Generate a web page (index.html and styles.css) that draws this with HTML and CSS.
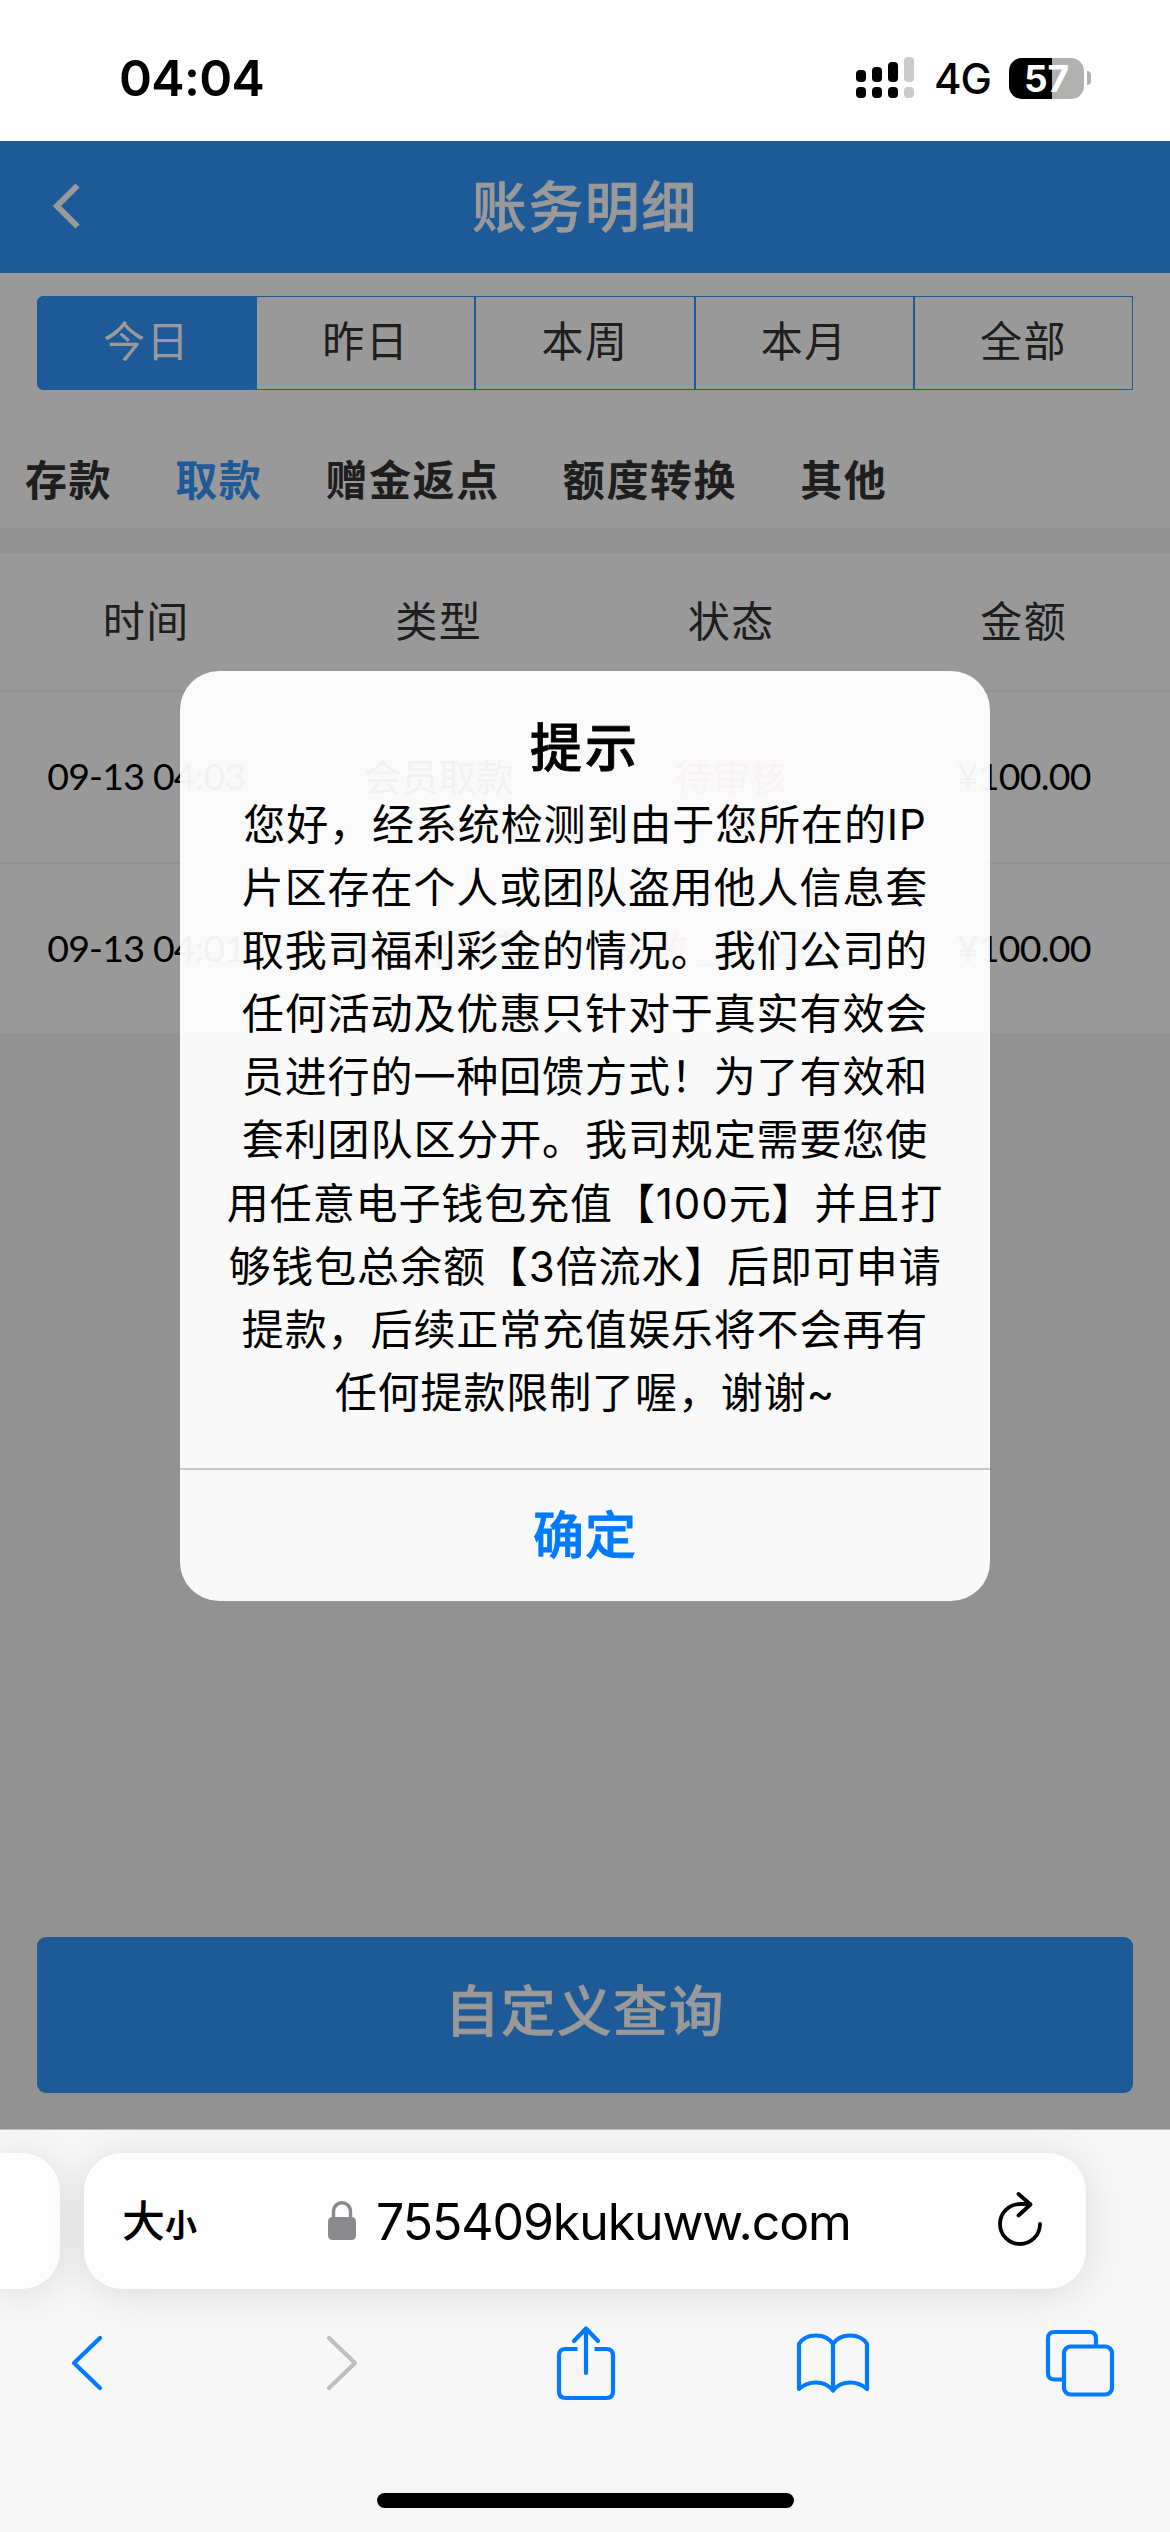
FILE: index.html
```html
<!DOCTYPE html>
<html lang="zh-CN">
<head>
<meta charset="utf-8">
<title>账务明细</title>
<link rel="stylesheet" href="styles.css">
</head>
<body>
<div class="phone">
  <header class="status">
    <span class="clock">04:04</span>
    <div class="indicators">
      <svg class="signal" width="58" height="42" viewBox="0 0 58 42">
        <g fill="#000">
          <rect x="0" y="13" width="10" height="12" rx="4"/><rect x="16" y="10" width="10" height="15" rx="4"/><rect x="32" y="5" width="10" height="20" rx="4"/>
          <rect x="0" y="30" width="10" height="11" rx="4"/><rect x="16" y="30" width="10" height="11" rx="4"/><rect x="32" y="30" width="10" height="11" rx="4"/>
        </g>
        <g fill="#cbcbcb"><rect x="48" y="0" width="10" height="25" rx="4"/><rect x="48" y="30" width="10" height="11" rx="4"/></g>
      </svg>
      <span class="network">4G</span>
      <div class="battery"><span class="cell">57</span><span class="tip"></span></div>
    </div>
  </header>

  <main class="page">
    <div class="navbar">
      <svg class="back" width="30" height="48" viewBox="0 0 30 48"><path d="M25.500 3.500L5 24L25.500 44.500" fill="none" stroke="#fff" stroke-width="6"/></svg>
      <h1>账务明细</h1>
    </div>
    <div class="range">
      <span class="on">今日</span><span>昨日</span><span>本周</span><span>本月</span><span>全部</span>
    </div>
    <nav class="kinds">
      <span>存款</span><span class="on">取款</span><span>赠金返点</span><span>额度转换</span><span>其他</span>
    </nav>
    <section class="table">
      <div class="row head"><span>时间</span><span>类型</span><span>状态</span><span>金额</span></div>
      <div class="row"><span class="num">09-13 04:03</span><span>会员取款</span><span class="bad">待审核</span><span class="num">¥100.00</span></div>
      <div class="row"><span class="num">09-13 04:01</span><span>虚拟币取款</span><span class="bad">失败 <a>【查看】</a></span><span class="num">¥100.00</span></div>
    </section>
    <div class="query">自定义查询</div>

    <div class="mask">
      <div class="dialog">
        <h2>提示</h2>
        <p>您好，经系统检测到由于您所在的IP<br>片区存在个人或团队盗用他人信息套<br>取我司福利彩金的情况。我们公司的<br>任何活动及优惠只针对于真实有效会<br>员进行的一种回馈方式！为了有效和<br>套利团队区分开。我司规定需要您使<br>用任意电子钱包充值【100元】并且打<br>够钱包总余额【3倍流水】后即可申请<br>提款，后续正常充值娱乐将不会再有<br>任何提款限制了喔，谢谢~</p>
        <div class="confirm">确定</div>
      </div>
    </div>
  </main>

  <footer class="browser">
    <div class="address-row">
      <div class="prev-tab"></div>
      <div class="address">
        <span class="size"><b>大</b><i>小</i></span>
        <span class="site">
          <svg width="28" height="40" viewBox="0 0 28 40"><rect x="0" y="16" width="28" height="23" rx="4.500" fill="#8a8a8e"/><path d="M5.500 17V11C5.500 -1.300 22.500 -1.300 22.500 11V17" fill="none" stroke="#8a8a8e" stroke-width="3.400"/></svg>
          <span class="url">755409kukuww.com</span>
        </span>
        <svg class="reload" width="46" height="56" viewBox="0 0 46 56"><g fill="none" stroke="#000" stroke-width="3.800" stroke-linecap="round" stroke-linejoin="round"><path d="M44 31A20 20 0 1 1 24 11H34"/><path d="M22.500 1L34.500 11.500L22.500 22.500"/></g></svg>
      </div>
    </div>
    <div class="tools">
      <svg width="32" height="56" viewBox="0 0 32 56"><path d="M29 3L3 28L29 53" class="line"/></svg>
      <svg width="32" height="56" viewBox="0 0 32 56"><path d="M3 3L29 28L3 53" class="line off"/></svg>
      <svg width="58" height="74" viewBox="0 0 58 74"><path d="M20.500 23H8.500Q2 23 2 29.500V65.500Q2 72 8.500 72H49.500Q56 72 56 65.500V29.500Q56 23 49.500 23H37.500" class="line butt"/><path d="M29 47V3M17 15L29 2.500L41 15" class="line"/></svg>
      <svg width="72" height="60" viewBox="0 0 72 60"><path d="M36 11C32 5 26 2.500 19 2.500C12 2.500 5.500 5 2 11V56C7 51.500 12 49.500 19 49.500C26 49.500 32 52.500 36 57.500C40 52.500 46 49.500 53 49.500C60 49.500 65 51.500 70 56V11C66.500 5 60 2.500 53 2.500C46 2.500 40 5 36 11V57" class="line"/></svg>
      <svg width="68" height="67" viewBox="0 0 68 67"><rect x="18" y="16.500" width="48" height="48" rx="6.500" class="line"/><path d="M16 49.500H8.500Q2 49.500 2 43V8.500Q2 2 8.500 2H43.500Q50 2 50 8.500V15" class="line butt"/></svg>
    </div>
    <div class="home"></div>
  </footer>
</div>
</body>
</html>
```
FILE: styles.css
```css
* { box-sizing: border-box; margin: 0; padding: 0; }

body { background: #fff; font-family: Inter, "Noto Sans CJK SC", sans-serif; }

svg { display: block; flex: none; overflow: visible; }

.phone { width: 1170px; height: 2532px; display: flex; flex-direction: column; overflow: hidden; }

/* status bar */
.status { height: 141px; display: flex; justify-content: space-between; align-items: flex-start; padding: 57px 79px 0 119px; }
.clock { font-size: 50px; line-height: 42px; font-weight: 600; letter-spacing: -.7px; white-space: nowrap; }
.indicators { display: flex; height: 42px; }
.network { margin-left: 20px; width: 75px; font-size: 42px; line-height: 43px; font-weight: 500; letter-spacing: -1px; }
.battery { display: flex; align-items: center; gap: 3px; }
.cell { width: 75px; height: 41px; border-radius: 13px; background: linear-gradient(90deg, #000 43px, #b1b1b1 43px); color: #fff; font-size: 37px; line-height: 41px; font-weight: 700; text-align: center; }
.tip { width: 4px; height: 14px; border-radius: 0 7px 7px 0; background: #b1b1b1; }

/* page */
.page { position: relative; height: 1988px; flex: none; background: #f4f4f4; display: flex; flex-direction: column; white-space: nowrap; }
.navbar { height: 132px; background: #3294fe; color: #fff; display: grid; grid-template-columns: 120px 1fr 120px; align-items: center; }
.navbar .back { margin: -3px 0 0 52px; }
.navbar h1 { font-size: 54.500px; line-height: 60px; font-weight: 500; letter-spacing: 2px; text-align: center; margin-top: -1px; -webkit-text-stroke: .7px currentColor; }

.range { background: #fff; padding: 23px 37px 0; height: 118px; display: flex; }
.range span { flex: 1; height: 94px; border: 1px solid #3294fe; line-height: 90px; font-size: 42px; letter-spacing: 1.5px; text-align: center; color: #333; }
.range .on { background: #3294fe; color: #fff; border-radius: 6px 0 0 6px; }

.kinds { background: #fff; height: 137px; padding: 60px 24px 0 25px; display: flex; gap: 63px; font-size: 42px; line-height: 60px; letter-spacing: 1.6px; font-weight: 700; color: #333; }
.kinds .on { color: #3294fe; }

.table { margin-top: 25px; background: #fff; }
.row { display: grid; grid-template-columns: repeat(4, 1fr); height: 172px; line-height: 170px; border-bottom: 2px solid #f4f4f4; font-family: Lato, "Noto Sans CJK SC", sans-serif; font-size: 37.500px; text-align: center; color: #000; }
.row:last-child { height: 171px; }
.row.head { height: 139px; line-height: 136px; font-size: 42px; letter-spacing: 1.5px; color: #333; }
.num { line-height: 168px; letter-spacing: -.8px; }
.bad { color: #ff3b30; }
.bad a { color: #3294fe; text-decoration: underline; text-decoration-thickness: 2px; }

.query { margin: auto 37px 36px; height: 156px; border-radius: 9px; background: #3294fe; color: #fff; font-size: 54.500px; font-weight: 500; letter-spacing: 1.500px; line-height: 149px; text-align: center; -webkit-text-stroke: .7px currentColor; }

/* alert */
.mask { position: absolute; inset: 0; background: rgba(0, 0, 0, .4); display: flex; justify-content: center; align-items: flex-start; padding-top: 530px; }
.dialog { width: 810px; height: 930px; border-radius: 39px; background: rgba(255, 255, 255, .95); text-align: center; display: flex; flex-direction: column; color: #000; }
.dialog h2 { margin-top: 42px; font-size: 52px; line-height: 72px; font-weight: 500; letter-spacing: 3px; -webkit-text-stroke: .8px currentColor; }
.dialog p { margin-top: 8px; font-size: 42px; line-height: 63.100px; letter-spacing: .9px; }
.confirm { margin-top: auto; height: 133px; border-top: 2px solid #c9c9c9; color: #007aff; font-size: 51px; line-height: 131px; font-weight: 500; letter-spacing: 1px; -webkit-text-stroke: .8px currentColor; }

/* browser chrome */
.browser { flex: 1; background: #f7f7f7; border-top: 1px solid #bdbdbd; display: flex; flex-direction: column; overflow: hidden; }
.address-row { display: flex; gap: 24px; margin-top: 23px; }
.prev-tab { width: 60px; height: 136px; border-radius: 0 38px 38px 0; background: #fdfdfd; box-shadow: 0 4px 40px rgba(0, 0, 0, .12); }
.address { width: 1002px; height: 136px; border-radius: 38px; background: #fdfdfd; box-shadow: 0 4px 40px rgba(0, 0, 0, .12); display: grid; grid-template-columns: 243px 1fr 90px; align-items: center; padding-left: 1px; }
.size { display: flex; align-items: baseline; padding: 5px 0 0 37px; line-height: 60px; }
.size b { font-size: 43px; font-weight: 500; }
.size i { font-size: 32px; font-style: normal; font-weight: 700; }
.site { display: flex; align-items: center; gap: 20px; }
.url { margin-top: 2px; font-size: 50px; line-height: 60px; letter-spacing: -1.1px; color: #000; }
.tools { display: grid; grid-template-columns: 255px 231px 240px 249px 68px; align-items: center; height: 74px; margin: 37px 0 0 71px; }
.line { fill: none; stroke: #007aff; stroke-width: 4.2; stroke-linecap: round; stroke-linejoin: round; }
.off { stroke: #bfbfbf; }
.butt { stroke-linecap: butt; }
.home { width: 417px; height: 15px; border-radius: 8px; background: #000; margin: auto auto 24px; }
```
